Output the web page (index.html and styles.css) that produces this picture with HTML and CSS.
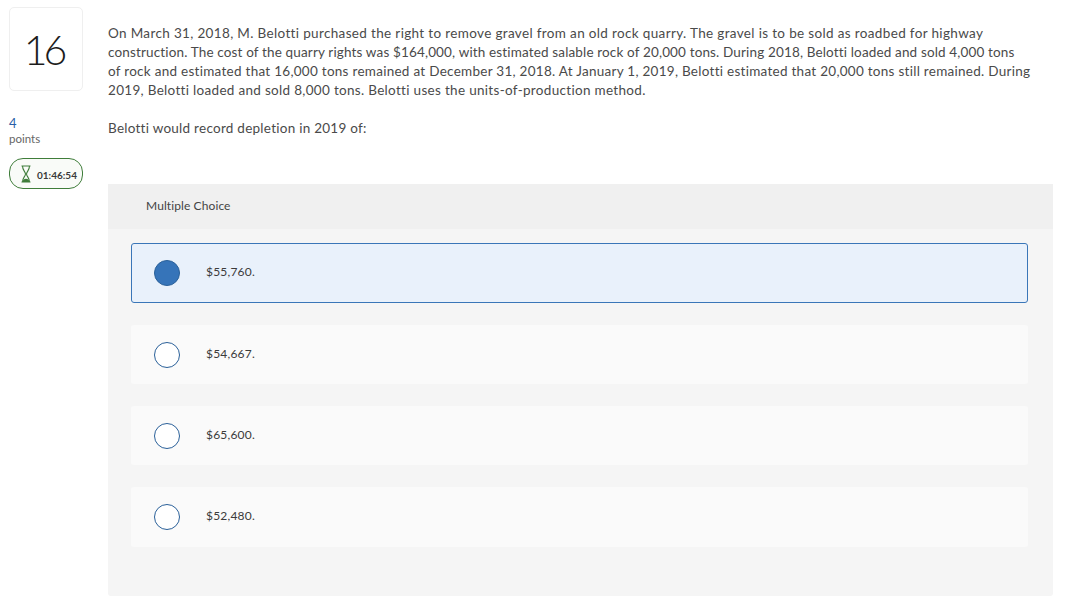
FILE: index.html
```html
<!DOCTYPE html>
<html lang="en">
<head>
  <meta charset="UTF-8">
  <title>Question 16</title>
  <link rel="stylesheet" href="styles.css">
</head>
<body>
  <div class="page">
    <aside class="side">
      <div class="number">16</div>
      <div class="points-value">4</div>
      <div class="points-label">points</div>
      <div class="timer">
        <svg class="hourglass" width="12" height="18" viewBox="0 0 12 18">
          <path d="M1.500 1h9M1.500 17h9M2.500 1c0 4 2.800 5.500 3 8M9.500 1c0 4-2.800 5.500-3 8M2.500 17c0-4 2.800-5.500 3-8M9.500 17c0-4-2.800-5.500-3-8" fill="none" stroke="#3f7d3a" stroke-width="1.100"/>
          <path d="M2.500 17c.2-2 1.800-3.200 3.500-3.200s3.300 1.200 3.500 3.200z" fill="#3f7d3a"/>
        </svg>
        <span>01:46:54</span>
      </div>
    </aside>
    <main class="content">
      <p class="question"><span class="line-one">On March 31, 2018, M. Belotti purchased the right to remove gravel from an old rock quarry. The gravel is to be sold as roadbed for highway</span><br><span class="line-two">construction. The cost of the quarry rights was $164,000, with estimated salable rock of 20,000 tons. During 2018, Belotti loaded and sold 4,000 tons</span><br><span class="line-three">of rock and estimated that 16,000 tons remained at December 31, 2018. At January 1, 2019, Belotti estimated that 20,000 tons still remained. During</span><br>2019, Belotti loaded and sold 8,000 tons. Belotti uses the units-of-production method.</p>
      <p class="question prompt">Belotti would record depletion in 2019 of:</p>
      <section class="choices">
        <div class="choices-head">Multiple Choice</div>
        <div class="choices-list">
          <div class="option selected"><span class="radio"></span><span>$55,760.</span></div>
          <div class="option"><span class="radio"></span><span>$54,667.</span></div>
          <div class="option"><span class="radio"></span><span>$65,600.</span></div>
          <div class="option last"><span class="radio"></span><span>$52,480.</span></div>
        </div>
      </section>
    </main>
  </div>
</body>
</html>
```
FILE: styles.css
```css
body {
  margin: 0;
  background: #fff;
  color: #3b3b3b;
  font-family: Lato, "Open Sans", sans-serif;
  overflow: hidden;
}

.page {
  display: flex;
  height: 610px;
  padding: 7px 31px 0 9px;
  box-sizing: border-box;
}

.side {
  width: 74px;
  margin-right: 25px;
  flex: none;
}

.number {
  height: 84px;
  padding-right: 5px;
  box-sizing: border-box;
  border: 1px solid #efefef;
  border-radius: 5px;
  font-size: 41px;
  font-weight: 300;
  letter-spacing: -4px;
  line-height: 84px;
  text-align: center;
  color: #1c1c1c;
}

.points-value {
  margin-top: 24px;
  font-size: 13px;
  line-height: 16px;
  color: #2a5ea6;
}

.points-label {
  font-size: 11.500px;
  line-height: 16px;
  color: #666;
}

.timer {
  display: flex;
  align-items: center;
  gap: 5px;
  height: 31px;
  margin-top: 11px;
  padding-left: 10px;
  box-sizing: border-box;
  border: 1px solid #3f7d3a;
  border-radius: 14px;
  background: #f9fbf8;
  font-size: 10px;
  font-weight: 700;
}

.timer span {
  margin-top: 2px;
}

.content {
  flex: 1;
  padding-top: 17px;
}

.question {
  margin: 0;
  font-size: 13.500px;
  letter-spacing: .31px;
  line-height: 19px;
  color: #4a4a4a;
}

.line-one {
  letter-spacing: .345px;
}

.line-two {
  letter-spacing: .15px;
}

.line-three {
  letter-spacing: .275px;
}

.prompt {
  margin-top: 19px;
  letter-spacing: .26px;
}

.choices {
  height: 412px;
  margin-top: 46px;
  border-radius: 3px;
  background: #f5f5f5;
}

.choices-head {
  height: 45px;
  padding-left: 38px;
  background: #f0f0f0;
  font-size: 12px;
  letter-spacing: .1px;
  line-height: 43px;
  color: #444;
}

.choices-list {
  display: flex;
  flex-direction: column;
  gap: 22px;
  width: 897px;
  margin-left: 23px;
  padding-top: 14px;
}

.option {
  display: flex;
  align-items: center;
  gap: 26px;
  height: 59px;
  padding-left: 23px;
  box-sizing: border-box;
  border-radius: 3px;
  background: #fafafa;
  font-size: 12px;
  letter-spacing: .2px;
}

.option span:last-child {
  margin-top: -3px;
}

.option.selected {
  height: 60px;
  padding-left: 22px;
  border: 1px solid #3a76b8;
  background: #e9f1fb;
}

.option.last {
  height: 60px;
}

.radio {
  width: 26px;
  height: 26px;
  box-sizing: border-box;
  border: 1px solid #2a6099;
  border-radius: 50%;
  background: #fff;
}

.selected .radio {
  background: #3674b9;
}
```
